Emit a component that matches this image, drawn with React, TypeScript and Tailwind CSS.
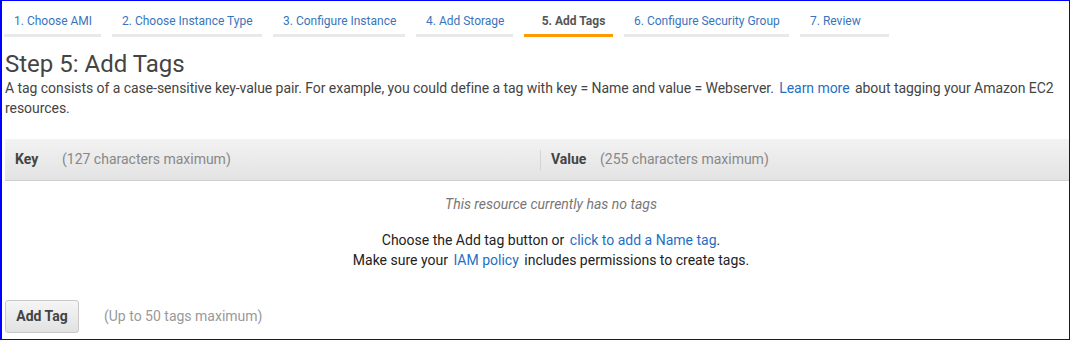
import React from "react";

const tabs = [
  { label: "1. Choose AMI", w: "w-[97px]" },
  { label: "2. Choose Instance Type", w: "w-[150px]" },
  { label: "3. Configure Instance", w: "w-[132px]" },
  { label: "4. Add Storage", w: "w-[97px]" },
  { label: "5. Add Tags", w: "w-[89px]", active: true },
  { label: "6. Configure Security Group", w: "w-[165px]" },
  { label: "7. Review", w: "w-[89px]" },
];

export default function App() {
  return (
    <div
      className="w-[1070px] h-[340px] overflow-hidden bg-white border border-[#0000ff] border-l-2 text-[#444]"
      style={{ fontFamily: "Roboto, 'Liberation Sans', sans-serif" }}
    >
      <div className="flex gap-[11px] pl-[2px] pt-[11px]">
        {tabs.map((t) => (
          <div
            key={t.label}
            className={`${t.w} h-[25px] pl-[10px] text-[12px] leading-[19px] border-b-[3px] ${
              t.active
                ? "border-[#f90] text-[#555] font-bold text-center pl-0"
                : "border-[#e9e9e9] text-[#3a74bb]"
            }`}
          >
            {t.label}
          </div>
        ))}
      </div>
      <div className="pl-[3px] pt-[13px]">
        <h1 className="text-[24px] leading-[28px] text-[#444]">Step 5: Add Tags</h1>
        <p className="text-[14px] leading-[20px] text-[#444] tracking-[-0.05px]">
          A tag consists of a case-sensitive key-value pair. For example, you could define a tag with key = Name
          and value = Webserver.{" "}
          <span className="text-[#1f6fc5] mx-[2px]">Learn more</span> about tagging your Amazon EC2 resources.
        </p>
      </div>
      <div className="ml-[3px] mt-[21px] h-[42px] flex items-center text-[14px] bg-gradient-to-b from-[#f2f2f2] to-[#e3e3e3] border-b border-[#cfcfcf]">
        <div className="w-[535px] flex items-center pl-[10px]">
          <span className="w-[47px] font-bold text-[#444]">Key</span>
          <span className="text-[#888]">(127 characters maximum)</span>
        </div>
        <div className="flex items-center border-l border-[#d4d4d4] h-[20px] pl-[10px]">
          <span className="w-[49px] font-bold text-[#444]">Value</span>
          <span className="text-[#888]">(255 characters maximum)</span>
        </div>
      </div>
      <div className="text-center text-[14px] ml-[3px] pl-[28px]">
        <div className="italic text-[#777] pt-[13px] leading-[20px]">This resource currently has no tags</div>
        <div className="pt-[16px] leading-[20px] text-[#222]">
          Choose the Add tag button or <span className="text-[#1f6fc5] ml-[2px]">click to add a Name tag</span>.
        </div>
        <div className="leading-[20px] text-[#222]">
          Make sure your <span className="text-[#1f6fc5] mx-[2px]">IAM policy</span> includes permissions to create
          tags.
        </div>
      </div>
      <div className="flex items-center pl-[3px] pt-[30px]">
        <button className="w-[74px] h-[33px] rounded-[3px] border border-[#c8c8c8] bg-gradient-to-b from-[#f5f5f5] to-[#e2e2e2] text-[14px] font-bold text-[#444]">
          Add Tag
        </button>
        <span className="ml-[25px] text-[14px] text-[#999]">(Up to 50 tags maximum)</span>
      </div>
    </div>
  );
}
